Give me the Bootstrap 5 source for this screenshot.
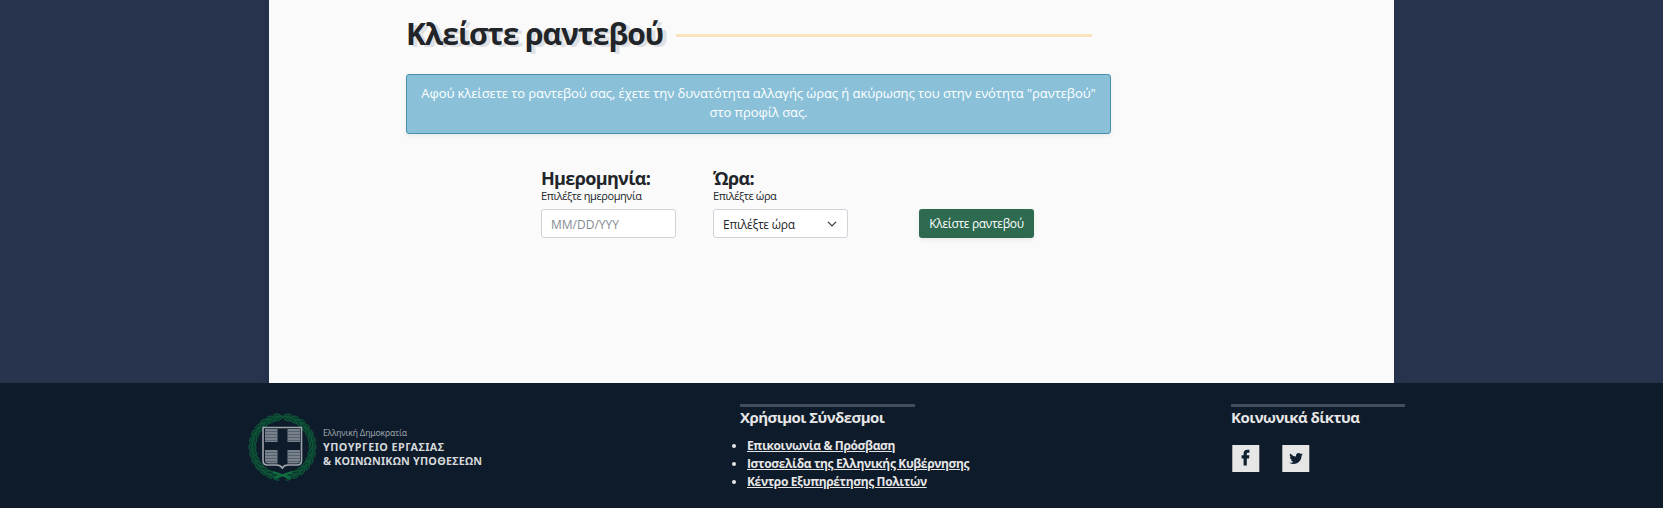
<!DOCTYPE html>
<html lang="el">
<head>
<meta charset="utf-8">
<meta name="viewport" content="width=device-width, initial-scale=1">
<title>Κλείστε ραντεβού</title>
<link href="https://cdn.jsdelivr.net/npm/bootstrap@5.3.0/dist/css/bootstrap.min.css" rel="stylesheet">
<style>
body{font-family:"Open Sans","Noto Sans",sans-serif;font-size:13px;background:#28344e;color:#212529;height:508px;overflow:hidden}
.sheet{width:1125px;height:383px;margin-left:269px;background:#fafafa;padding:0 137px;box-shadow:0 0 12px rgba(0,0,0,.12)}
.title-row{padding-top:14px;height:74px}
.title-row h1{font-size:30px;line-height:39px;font-weight:700;letter-spacing:-1.05px;text-shadow:4px 2px 0 #dee0e3;width:270px;white-space:nowrap}
.rule{width:416px;height:3px;background:#fae3bd;margin-top:20px}
.notice{width:705px;height:60px;background:#8ac1d9;border:1px solid #468fae;border-radius:3px;color:#fff;line-height:19px;padding:9px 8px;font-size:13px;letter-spacing:-.08px;white-space:nowrap}
.booking{padding:34px 0 0 135px}
.booking h2{font-size:18px;line-height:21px;font-weight:700;letter-spacing:-.65px}
.booking small{font-size:11px;line-height:14px;letter-spacing:-.43px;white-space:nowrap}
.field{width:135px;margin-right:37px}
.booking .form-control,.booking .form-select{height:29px;font-size:12px;line-height:17px;padding:6px 9px 4px;border-radius:3px;border-color:#ced4da;margin-top:6px}
.booking .form-select{background-size:12px 10px;background-position:right 9px center;letter-spacing:-.25px}
.booking .form-control::placeholder{color:#858b91}
.booking .btn{width:115px;height:29px;margin:41px 0 0 34px;background:#2d6a4f;color:#fff;border:0;border-radius:3px;font-size:12px;letter-spacing:-.35px;padding:1px 0 0;white-space:nowrap}
footer{height:125px;background:#0e1b2a;color:#e6e6e6}
.brand{width:740px;padding:26px 0 0 247px}
.links{width:491px;padding-top:21px}
.social{padding-top:21px}
footer h3{font-size:15px;line-height:20px;font-weight:700;letter-spacing:-.56px;border-top:3px solid #424d59;width:175px;white-space:nowrap}
.social h3{width:174px}
footer ul{padding-left:7px;line-height:18px;font-weight:700;font-size:12px;letter-spacing:-.35px;margin-top:10px}
footer ul a,footer ul a:hover{color:#e6e6e6}
.icons{margin-top:15px}
</style>
</head>
<body>
<main class="sheet">
  <div class="title-row d-flex"><h1 class="mb-0">Κλείστε ραντεβού</h1><div class="rule"></div></div>
  <div class="notice text-center shadow-sm" role="alert">Αφού κλείσετε το ραντεβού σας, έχετε την δυνατότητα αλλαγής ώρας ή ακύρωσης του στην ενότητα "ραντεβού"<br>στο προφίλ σας.</div>
  <form class="booking d-flex align-items-start">
    <div class="field d-flex flex-column flex-shrink-0"><h2 class="mb-0">Ημερομηνία:</h2><small>Επιλέξτε ημερομηνία</small><input class="form-control" placeholder="MM/DD/YYY" aria-label="Ημερομηνία"></div>
    <div class="field d-flex flex-column flex-shrink-0"><h2 class="mb-0">Ώρα:</h2><small>Επιλέξτε ώρα</small><select class="form-select" aria-label="Ώρα"><option>Επιλέξτε ώρα</option></select></div>
    <button type="button" class="btn shadow-sm flex-shrink-0">Κλείστε ραντεβού</button>
  </form>
</main>
<footer class="d-flex">
  <div class="brand">
    <svg width="240" height="74" viewBox="247 409 240 74" class="d-block">
      <g id="wreath" fill="#0b4a33" stroke="#117040" stroke-width=".5"></g>
      <path d="M263 427.500h38.500v33q0 4.500-4.500 4.500h-9q-4 0-5.700 3q-1.800-3-5.800-3h-9q-4.500 0-4.500-4.500z" fill="#0e1b2a" stroke="#a0a5ad" stroke-width="1.600"/>
      <g fill="#77808b"><path d="M265 429h12.500v13H265zM287.500 429H300v13h-12.500zM265 450h12.500v13.500H268q-3 0-3-3zM287.500 450H300v10.500q0 3-3 3h-9.500z"/></g>
      <path d="M265 431.500h12.500m-12.500 3h12.500m-12.500 3h12.500m-12.500 3h12.500m10-9H300m-12.500 3H300m-12.500 3H300m-12.500 3H300M265 452.500h12.500m-12.500 3h12.500m-12.500 3h12.500m-12.500 3h12.500m10-9H300m-12.500 3H300m-12.500 3H300m-12.500 3H300" stroke="#4d5965" stroke-width=".8"/>
      <g font-family="Noto Sans,sans-serif">
        <text x="323" y="436" font-size="8.600" fill="#9da3aa" textLength="84">Ελληνική Δημοκρατία</text>
        <g font-size="10.800" font-weight="700" fill="#d5d8db"><text x="323" y="451" textLength="121">ΥΠΟΥΡΓΕΙΟ ΕΡΓΑΣΙΑΣ</text><text x="323" y="464.500" textLength="159">&amp; ΚΟΙΝΩΝΙΚΩΝ ΥΠΟΘΕΣΕΩΝ</text></g>
      </g>
    </svg>
  </div>
  <div class="links"><h3 class="mb-0">Χρήσιμοι Σύνδεσμοι</h3>
    <ul class="mb-0"><li><a href="#">Επικοινωνία &amp; Πρόσβαση</a></li><li><a href="#">Ιστοσελίδα της Ελληνικής Κυβέρνησης</a></li><li><a href="#">Κέντρο Εξυπηρέτησης Πολιτών</a></li></ul>
  </div>
  <div class="social"><h3 class="mb-0">Κοινωνικά δίκτυα</h3>
    <svg width="90" height="34" viewBox="1231 442 90 34" class="icons d-block">
      <path d="M1232.300 445h27v27h-27zM1282.300 445h27v27h-27z" fill="#e6e6e6"/>
      <path d="M1243.600 465.500v-7h-2v-3.200h2v-1.700c0-2.700 1.300-3.900 3.800-3.900h2v3h-1.400c-1 0-1.200.4-1.200 1.200v1.400h2.600l-.4 3.200h-2.200v7z" fill="#102231"/>
      <path transform="translate(1289.300 451.300) scale(.85)" d="M5.026 15c6.038 0 9.341-5.003 9.341-9.334q.002-.211-.006-.422A6.700 6.700 0 0 0 16 3.542a6.700 6.700 0 0 1-1.889.518 3.300 3.300 0 0 0 1.447-1.817 6.500 6.500 0 0 1-2.087.793A3.286 3.286 0 0 0 7.875 6.030a9.320 9.320 0 0 1-6.767-3.429 3.290 3.290 0 0 0 1.018 4.382A3.300 3.300 0 0 1 .64 6.575v.045a3.290 3.290 0 0 0 2.632 3.218 3.200 3.200 0 0 1-.865.115 3 3 0 0 1-.614-.057 3.280 3.280 0 0 0 3.067 2.277A6.600 6.600 0 0 1 .78 13.580a6 6 0 0 1-.78-.045A9.340 9.340 0 0 0 5.026 15" fill="#102231"/>
    </svg>
  </div>
</footer>
<script src="https://cdn.jsdelivr.net/npm/bootstrap@5.3.0/dist/js/bootstrap.bundle.min.js"></script>
<script>
// Two mirrored branches of laurel leaves around the shield
let leaves = '';
for (const side of [-1, 1]) for (let i = 0; i < 13; i++) {
  const a = 8 + i * 13.2;
  for (const [r, tilt] of [[31.5, -22], [28.5, 20]])
    leaves += `<g transform="translate(282.500 447) scale(${side} 1) rotate(${a}) translate(0 ${-r}) rotate(${tilt})"><path d="M-4.800 0Q0-3.600 4.800 0Q0 3.600-4.800 0z"/><path d="M-4 0H4" stroke="#0e1b2a"/></g>`;
}
leaves += '<path d="M273 472l17 6m2-6l-17 6" stroke-width="2"/>';
document.getElementById('wreath').innerHTML = leaves;
</script>
</body>
</html>
